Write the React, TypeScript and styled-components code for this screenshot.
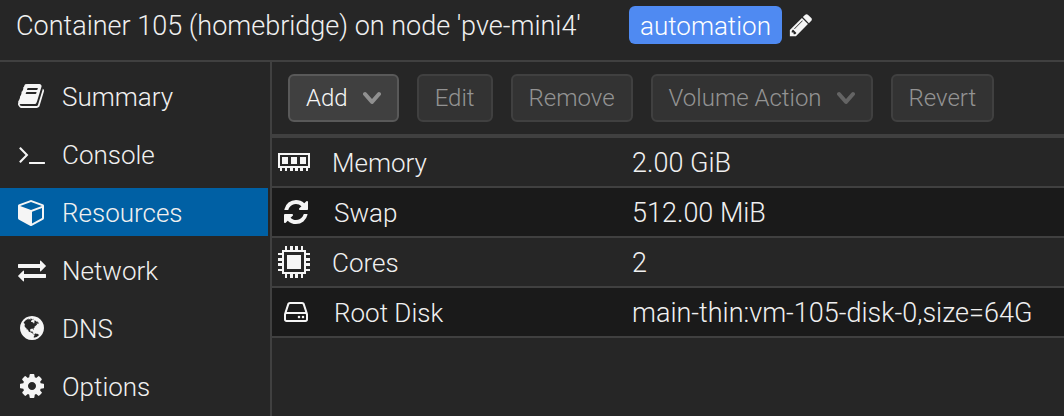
import React from "react";
import styled, { createGlobalStyle } from "styled-components";

const GlobalStyle = createGlobalStyle`
  *, *::before, *::after {
    box-sizing: border-box;
  }
  body {
    margin: 0;
    background: #262626;
    color: #f0f0f0;
    font-family: Roboto, "Liberation Sans", sans-serif;
    font-size: 26px;
    font-weight: 300;
    line-height: 32px;
  }
`;

const Page = styled.div`
  display: flex;
  flex-direction: column;
  min-height: 100vh;
`;

const Header = styled.header`
  display: flex;
  align-items: center;
  padding: 6px 16px 16px;
  border-bottom: 2px solid #404040;
  white-space: nowrap;
`;

const Title = styled.h1`
  margin: 0 48px 0 0;
  padding-top: 2px;
  font-size: 27px;
  font-weight: inherit;
`;

const Tag = styled.span`
  padding: 4px 11px 2px;
  border-radius: 6px;
  background: #4f8af2;
  color: #ffffff;
`;

const IconButton = styled.button`
  display: flex;
  margin-left: 6px;
  padding: 0;
  border: 0;
  background: none;
  color: #f5f5f5;
`;

const Body = styled.div`
  display: flex;
  flex: 1;
`;

const Sidebar = styled.nav`
  display: flex;
  flex-direction: column;
  flex: none;
  gap: 10px;
  width: 272px;
  padding: 10px 2px 0 0;
  border-right: 2px solid #404040;
`;

const NavLink = styled.a<{ $active?: boolean }>`
  display: flex;
  align-items: center;
  gap: 16px;
  height: 48px;
  padding: 0 18px;
  background: ${(p) => (p.$active ? "#0060a4" : "transparent")};
  color: inherit;
  text-decoration: none;
`;

const Label = styled.span`
  padding-top: 2px;
`;

const Main = styled.main`
  flex: 1;
  min-width: 0;
`;

const Toolbar = styled.div`
  display: flex;
  gap: 18px;
  padding: 12px 16px;
  border-bottom: 4px solid #404040;
`;

const ToolButton = styled.button`
  display: flex;
  align-items: center;
  gap: 15px;
  height: 48px;
  padding: 0 16px;
  border: 2px solid #595959;
  border-radius: 6px;
  background: #404040;
  color: #f5f5f5;
  font: inherit;
  font-size: 24px;
  white-space: nowrap;

  &:disabled {
    border-color: #404040;
    background: #333333;
    color: #939393;
  }
`;

const Chevron = styled.svg`
  width: 18px;
  height: 14px;
  fill: none;
  stroke: #909090;
  stroke-width: 4;
  stroke-linecap: round;
  stroke-linejoin: round;

  ${ToolButton}:disabled & {
    stroke: #646464;
  }
`;

const ResourceTable = styled.table`
  width: 100%;
  border-spacing: 0;
  table-layout: fixed;
`;

const ResourceRow = styled.tr`
  height: 50px;

  &:nth-child(even) {
    background: #1a1a1a;
  }
`;

const NameCell = styled.th`
  width: 360px;
  padding: 0 6px;
  border-bottom: 2px solid #404040;
  font-weight: inherit;
  text-align: left;
`;

const NameContent = styled.span`
  display: flex;
  align-items: center;
  gap: 20px;
`;

const IconSlot = styled.span<{ $hardware?: boolean }>`
  display: flex;
  justify-content: ${(p) => (p.$hardware ? "flex-start" : "center")};
  width: ${(p) => (p.$hardware ? 34 : 36)}px;
`;

const ValueCell = styled.td`
  padding: 2px 0 0;
  border-bottom: 2px solid #404040;
  font-size: 27px;
  white-space: nowrap;
`;

const Glyph = styled.svg`
  flex: none;
  fill: #f5f5f5;
`;

const paths = {
  book: "M1639 478q40 57 18 129l-275 906q-19 64-76.5 107.5t-122.5 43.5h-923q-77 0-148.5-53.5t-99.5-131.5q-24-67-2-127 0-4 3-27t4-37q1-8-3-21.5t-3-19.5q2-11 8-21t16.5-23.5 16.5-23.5q23-38 45-91.5t30-91.5q3-10 .5-30t-.5-28q3-11 17-28t17-23q21-36 42-92t25-90q1-9-2.5-32t.5-28q4-13 22-30.5t22-22.5q19-26 42.5-84.5t27.5-96.5q1-8-3-25.5t-2-26.5q2-8 9-18t18-23 17-21q8-12 16.5-30.5t15-35 16-36 19.5-32 26.5-23.5 36-11.5 47.5 5.5l-1 3q38-9 51-9h761q74 0 114 56t18 130l-274 906q-36 119-71.5 153.5t-128.5 34.5h-869q-27 0-38 15-11 16-1 43 24 70 144 70h923q29 0 56-15.5t35-41.5l300-987q7-22 5-57 38 15 59 43zm-1064 2q-4 13 2 22.5t20 9.5h608q13 0 25.5-9.5t16.5-22.5l21-64q4-13-2-22.5t-20-9.5h-608q-13 0-25.5 9.5t-16.5 22.5zm-83 256q-4 13 2 22.5t20 9.5h608q13 0 25.5-9.5t16.5-22.5l21-64q4-13-2-22.5t-20-9.5h-608q-13 0-25.5 9.5t-16.5 22.5z",
  terminal: "M649 983l-466 466q-10 10-23 10t-23-10l-50-50q-10-10-10-23t10-23l393-393-393-393q-10-10-10-23t10-23l50-50q10-10 23-10t23 10l466 466q10 10 10 23t-10 23zm1079 457v64q0 14-9 23t-23 9h-960q-14 0-23-9t-9-23v-64q0-14 9-23t23-9h960q14 0 23 9t9 23z",
  cube: "M896 1629l640-349v-636l-640 233v752zm-64-865l698-254-698-254-698 254zm832-252v768q0 35-18 65t-49 47l-704 384q-28 16-61 16t-61-16l-704-384q-31-17-49-47t-18-65v-768q0-40 23-73t61-47l704-256q22-8 44-8t44 8l704 256q38 14 61 47t23 73z",
  exchange: "M1792 1184v192q0 13-9.5 22.5t-22.5 9.5h-1376v192q0 13-9.5 22.5t-22.5 9.5q-12 0-24-10l-319-320q-9-9-9-22 0-14 9-23l320-320q9-9 23-9 13 0 22.5 9.5t9.5 22.5v192h1376q13 0 22.5 9.5t9.5 22.5zm0-544q0 14-9 23l-320 320q-9 9-23 9-13 0-22.5-9.5t-9.5-22.5v-192h-1376q-13 0-22.5-9.5t-9.5-22.5v-192q0-13 9.5-22.5t22.5-9.5h1376v-192q0-14 9-23t23-9q12 0 24 10l319 319q9 9 9 23z",
  globe: "M896 128q209 0 385.500 103t279.500 279.500 103 385.500-103 385.500-279.500 279.500-385.500 103-385.500-103-279.500-279.500-103-385.500 103-385.500 279.500-279.500 385.500-103zm274 521q-2 1-9.500 9.500t-13.500 9.500q2 0 4.500-5t5-11 3.500-7q6-7 22-15 14-6 52-12 34-8 51 11-2-2 9.500-13t14.500-12q3-2 15-4.500t15-7.500l2-22q-12 1-17.500-7t-6.500-21q0 2-6 8 0-7-4.500-8t-11.500 1-9 1q-10-3-15-7.500t-8-16.500-4-15q-2-5-9.500-10.500t-9.500-10.500q-1-2-2.500-5.500t-3-6.500-4-5.500-5.500-2.500-7 5-7.500 10-4.500 5q-3-2-6-1.500t-4.500 1-4.500 3-5 3.500q-3 2-8.500 3t-8.500 2q15-5-1-11-10-4-16-3 9-4 7.500-12t-8.500-14h5q-1-4-8.500-8.500t-17.500-8.500-13-6q-8-5-34-9.500t-33-.5q-5 6-4.500 10.500t4 14 3.500 12.500q1 6-5.500 13t-6.500 12q0 7 14 15.500t10 21.500q-3 8-16 16t-16 12q-5 8-1.500 18.500t10.500 16.500q2 2 1.500 4t-3.500 4.500-5.500 4-6.500 3.500l-3 2q-11 5-20.500-6t-13.500-26q-7-25-16-30-23-8-29 1-5-13-41-26-25-9-58-4 6-1 0-15-7-15-19-12 3-6 4-17.500t1-13.500q3-13 12-23 1-1 7-8.500t9.500-13.500.5-6q35 4 50-11 5-5 11.500-17t10.500-17q9-6 14-5.500t14.500 5.500 14.500 5q14 1 15.500-11t-7.500-20q12 1 3-17-4-7-8-9-12-4-27 5-8 4 2 8-1-1-9.500 10.500t-16.500 17.500-16-5q-1-1-5.500-13.500t-9.500-13.500q-8 0-16 15 3-8-11-15t-24-8q19-12-8-27-7-4-20.500-5t-19.500 4q-5 7-5.500 11.500t5 8 10.500 5.500 11.500 4 8.500 3q14 10 8 14-2 1-8.500 3.500t-11.500 4.500-6 4q-3 4 0 14t-2 14q-5-5-9-17.500t-7-16.500q7 9-25 6l-10-1q-4 0-16 2t-20.500 1-13.500-8q-4-8 0-20 1-4 4-2-4-3-11-9.500t-10-8.500q-46 15-94 41 6 1 12-1 5-2 13-6.500t10-5.500q34-14 42-7l5-5q14 16 20 25-7-4-30-1-20 6-22 12 7 12 5 18-4-3-11.500-10t-14.500-11-15-5q-16 0-22 1-146 80-235 222 7 7 12 8 4 1 5 9t2.500 11 11.500-3q9 8 3 19 1-1 44 27 19 17 21 21 3 11-10 18-1-2-9-9t-9-4q-3 5 .5 18.500t10.500 12.500q-7 0-9.500 16t-2.500 35.500-1 23.500l2 1q-3 12 5.500 34.500t21.500 19.500q-13 3 20 43 6 8 8 9 3 2 12 7.500t15 10 10 10.500q4 5 10 22.500t14 23.500q-2 6 9.500 20t10.500 23q-1 0-2.500 1t-2.500 1q3 7 15.500 14t15.500 13q1 3 2 10t3 11 8 2q2-20-24-62-15-25-17-29-3-5-5.500-15.500t-4.500-14.500q2 0 6 1.500t8.500 3.500 7.500 4 2 3q-3 7 2 17.500t12 18.500 17 19 12 13q6 6 14 19.500t0 13.500q9 0 20 10.500t17 19.500q5 8 8 26t5 24q2 7 8.500 13.500t12.500 9.500l16 8 13 7q5 2 18.500 10.500t21.500 11.500q10 4 16 4t14.500-2.500 13.500-3.500q15-2 29 15t21 21q36 19 55 11-2 1 .5 7.500t8 15.500 9 14.500 5.500 8.500q5 6 18 15t18 15q6-4 7-9-3 8 7 20t18 10q14-3 14-32-31 15-49-18 0-1-2.500-5.500t-4-8.500-2.500-8.500 0-7.500 5-3q9 0 10-3.500t-2-12.500-4-13q-1-8-11-20t-12-15q-5 9-16 8t-16-9q0 1-1.500 5.500t-1.500 6.500q-13 0-15-1 1-3 2.500-17.500t3.500-22.500q1-4 5.500-12t7.500-14.500 4-12.500-4.500-9.500-17.500-2.500q-19 1-26 20-1 3-3 10.500t-5 11.500-9 7q-7 3-24 2t-24-5q-13-8-22.500-29t-9.500-37q0-10 2.500-26.500t3-25-5.500-24.500q3-2 9-9.500t10-10.500q2-1 4.500-1.500t4.500 0 4-1.500 3-6q-1-1-4-3-3-3-4-3 7 3 28.500-1.500t27.500 1.500q15 11 22-2 0-1-2.500-9.500t-.5-13.500q5 27 29 9 3 3 15.500 5t17.500 5q3 2 7 5.500t5.500 4.500 5-.5 8.500-6.500q10 14 12 24 11 40 19 44 7 3 11 2t4.500-9.500 0-14-1.500-12.500l-1-8v-18l-1-8q-15-3-18.500-12t1.500-18.500 15-18.500q1-1 8-3.500t15.500-6.500 12.500-8q21-19 15-35 7 0 11-9-1 0-5-3t-7.500-5-4.500-2q9-5 2-16 5-3 7.500-11t7.500-10q9 12 21 2 7-8 1-16 5-7 20.500-10.500t18.500-9.500q7 2 8-2t1-12 3-12q4-5 15-9t13-5l17-11q3-4 0-4 18 2 31-11 10-11-6-20 3-6-3-9.500t-15-5.500q3-1 11.500-.5t10.500-1.500q15-10-7-16-17-5-43 12zm-163 877q206-36 351-189-3-3-12.500-4.500t-12.500-3.500q-18-7-24-8 1-7-2.500-13t-8-9-12.500-8-11-7q-2-2-7-6t-7-5.500-7.500-4.500-8.500-2-10 1l-3 1q-3 1-5.500 2.500t-5.500 3-4 3 0 2.500q-21-17-36-22-5-1-11-5.500t-10.500-7-10-1.500-11.500 7q-5 5-6 15t-2 13q-7-5 0-17.500t2-18.500q-3-6-10.500-4.500t-12 4.500-11.500 8.500-9 6.500-8.500 5.500-8.500 7.500q-3 4-6 12t-5 11q-2-4-11.500-6.500t-9.500-5.500q2 10 4 35t5 38q7 31-12 48-27 25-29 40-4 22 12 26 0 7-8 20.500t-7 21.500q0 6 2 16z",
  cog: "M1152 896q0-106-75-181t-181-75-181 75-75 181 75 181 181 75 181-75 75-181zm512-109v222q0 12-8 23t-20 13l-185 28q-19 54-39 91 35 50 107 138 10 12 10 25t-9 23q-27 37-99 108t-94 71q-12 0-26-9l-138-108q-44 23-91 38-16 136-29 186-7 28-36 28h-222q-14 0-24.500-8.500t-11.500-21.500l-28-184q-49-16-90-37l-141 107q-10 9-25 9-14 0-25-11-126-114-165-168-7-10-7-23 0-12 8-23 15-21 51-66.500t54-70.500q-27-50-41-99l-183-27q-13-2-21-12.500t-8-23.500v-222q0-12 8-23t19-13l186-28q14-46 39-92-40-57-107-138-10-12-10-24 0-10 9-23 26-36 98.500-107.500t94.500-71.500q13 0 26 10l138 107q44-23 91-38 16-136 29-186 7-28 36-28h222q14 0 24.500 8.500t11.500 21.500l28 184q49 16 90 37l142-107q9-9 24-9 13 0 25 10 129 119 165 170 7 8 7 22 0 12-8 23-15 21-51 66.500t-54 70.500q26 50 41 98l183 28q13 2 21 12.500t8 23.500z",
  refresh: "M1639 1056q0 5-1 7-64 268-268 434.500t-478 166.500q-146 0-282.500-55t-243.500-157l-129 129q-19 19-45 19t-45-19-19-45v-448q0-26 19-45t45-19h448q26 0 45 19t19 45-19 45l-137 137q71 66 161 102t187 36q134 0 250-65t186-179q11-17 53-117 8-23 30-23h192q13 0 22.500 9.500t9.500 22.500zm25-800v448q0 26-19 45t-45 19h-448q-26 0-45-19t-19-45 19-45l138-138q-148-137-349-137-134 0-250 65t-186 179q-11 17-53 117-8 23-30 23h-199q-13 0-22.500-9.500t-9.500-22.500v-7q65-268 270-434.500t480-166.500q146 0 284 55.500t245 156.500l130-129q19-19 45-19t45 19 19 45z",
  disk: "M1168 1216q0 33-23.500 56.500t-56.500 23.500-56.500-23.500-23.500-56.500 23.500-56.500 56.500-23.500 56.500 23.500 23.500 56.500zm256 0q0 33-23.500 56.500t-56.500 23.500-56.500-23.500-23.500-56.500 23.500-56.500 56.500-23.500 56.500 23.500 23.500 56.500zm112 160v-320q0-13-9.500-22.500t-22.500-9.500h-1216q-13 0-22.500 9.500t-9.500 22.500v320q0 13 9.500 22.500t22.500 9.500h1216q13 0 22.500-9.500t9.500-22.500zm-1230-480h1180l-157-482q-4-13-16-21.500t-26-8.500h-782q-14 0-26 8.500t-16 21.500zm1358 160v320q0 66-47 113t-113 47h-1216q-66 0-113-47t-47-113v-320q0-25 16-75l197-606q17-53 63-86t101-33h782q55 0 101 33t63 86l197 606q16 50 16 75z",
  pencil: "M491 1536l91-91-235-235-91 91v107h128v128h107zm523-928q0-22-22-22-10 0-17 7l-542 542q-7 7-7 17 0 22 22 22 10 0 17-7l542-542q7-7 7-17zm-54-192l416 416-832 832h-416v-416zm683 96q0 53-37 90l-166 166-416-416 166-165q36-38 90-38 53 0 91 38l235 234q37 39 37 91z",
};

type IconName = keyof typeof paths;

const Icon = ({ name, size = 28 }: { name: IconName; size?: number }) => (
  <Glyph width={size} height={size} viewBox="0 0 1792 1792" aria-hidden="true">
    <path d={paths[name]} />
  </Glyph>
);

const MemoryIcon = () => (
  <Glyph width="32" height="32" viewBox="0 0 32 32" shapeRendering="crispEdges" aria-hidden="true">
    <path
      fillRule="evenodd"
      d="M0 7h32v15h-32zM2 9v11h28v-11zM4 11h6v7h-6zM13 11h6v7h-6zM22 11h6v7h-6zM2 22h2v3h-2zM7 22h2v3h-2zM12 22h3v3h-3zM17 22h3v3h-3zM22 22h3v3h-3zM28 22h2v3h-2z"
    />
  </Glyph>
);

const CpuIcon = () => (
  <Glyph width="32" height="32" viewBox="0 0 32 32" shapeRendering="crispEdges" aria-hidden="true">
    <path
      fillRule="evenodd"
      d="M4 4h24v24h-24zM6 6v20h20v-20zM9 9h14v14h-14z
         M7 0h2v4h-2zM12 0h3v4h-3zM17 0h3v4h-3zM23 0h2v4h-2z
         M7 28h2v4h-2zM12 28h3v4h-3zM17 28h3v4h-3zM23 28h2v4h-2z
         M0 7h4v2h-4zM0 12h4v3h-4zM0 17h4v3h-4zM0 23h4v2h-4z
         M28 7h4v2h-4zM28 12h4v3h-4zM28 17h4v3h-4zM28 23h4v2h-4z"
    />
  </Glyph>
);

const MenuArrow = () => (
  <Chevron viewBox="0 0 18 14" aria-hidden="true">
    <path d="M2 3l7 8 7-8" />
  </Chevron>
);

const navItems: { label: string; icon: IconName; active?: boolean }[] = [
  { label: "Summary", icon: "book" },
  { label: "Console", icon: "terminal" },
  { label: "Resources", icon: "cube", active: true },
  { label: "Network", icon: "exchange" },
  { label: "DNS", icon: "globe" },
  { label: "Options", icon: "cog" },
];

const resources = [
  { name: "Memory", value: "2.00 GiB", icon: <MemoryIcon />, hardware: true },
  { name: "Swap", value: "512.00 MiB", icon: <Icon name="refresh" /> },
  { name: "Cores", value: "2", icon: <CpuIcon />, hardware: true },
  { name: "Root Disk", value: "main-thin:vm-105-disk-0,size=64G", icon: <Icon name="disk" /> },
];

export default function App() {
  return (
    <Page>
      <GlobalStyle />
      <Header>
        <Title>Container 105 (homebridge) on node 'pve-mini4'</Title>
        <Tag>automation</Tag>
        <IconButton type="button" aria-label="Edit tags">
          <Icon name="pencil" size={26} />
        </IconButton>
      </Header>
      <Body>
        <Sidebar>
          {navItems.map((item) => (
            <NavLink
              key={item.label}
              href="#"
              $active={item.active}
              aria-current={item.active ? "page" : undefined}
            >
              <Icon name={item.icon} />
              <Label>{item.label}</Label>
            </NavLink>
          ))}
        </Sidebar>
        <Main>
          <Toolbar role="toolbar">
            <ToolButton type="button">
              Add
              <MenuArrow />
            </ToolButton>
            <ToolButton type="button" disabled>
              Edit
            </ToolButton>
            <ToolButton type="button" disabled>
              Remove
            </ToolButton>
            <ToolButton type="button" disabled>
              Volume Action
              <MenuArrow />
            </ToolButton>
            <ToolButton type="button" disabled>
              Revert
            </ToolButton>
          </Toolbar>
          <ResourceTable>
            <tbody>
              {resources.map((item) => (
                <ResourceRow key={item.name}>
                  <NameCell scope="row">
                    <NameContent>
                      <IconSlot $hardware={item.hardware}>{item.icon}</IconSlot>
                      <Label>{item.name}</Label>
                    </NameContent>
                  </NameCell>
                  <ValueCell>{item.value}</ValueCell>
                </ResourceRow>
              ))}
            </tbody>
          </ResourceTable>
        </Main>
      </Body>
    </Page>
  );
}
